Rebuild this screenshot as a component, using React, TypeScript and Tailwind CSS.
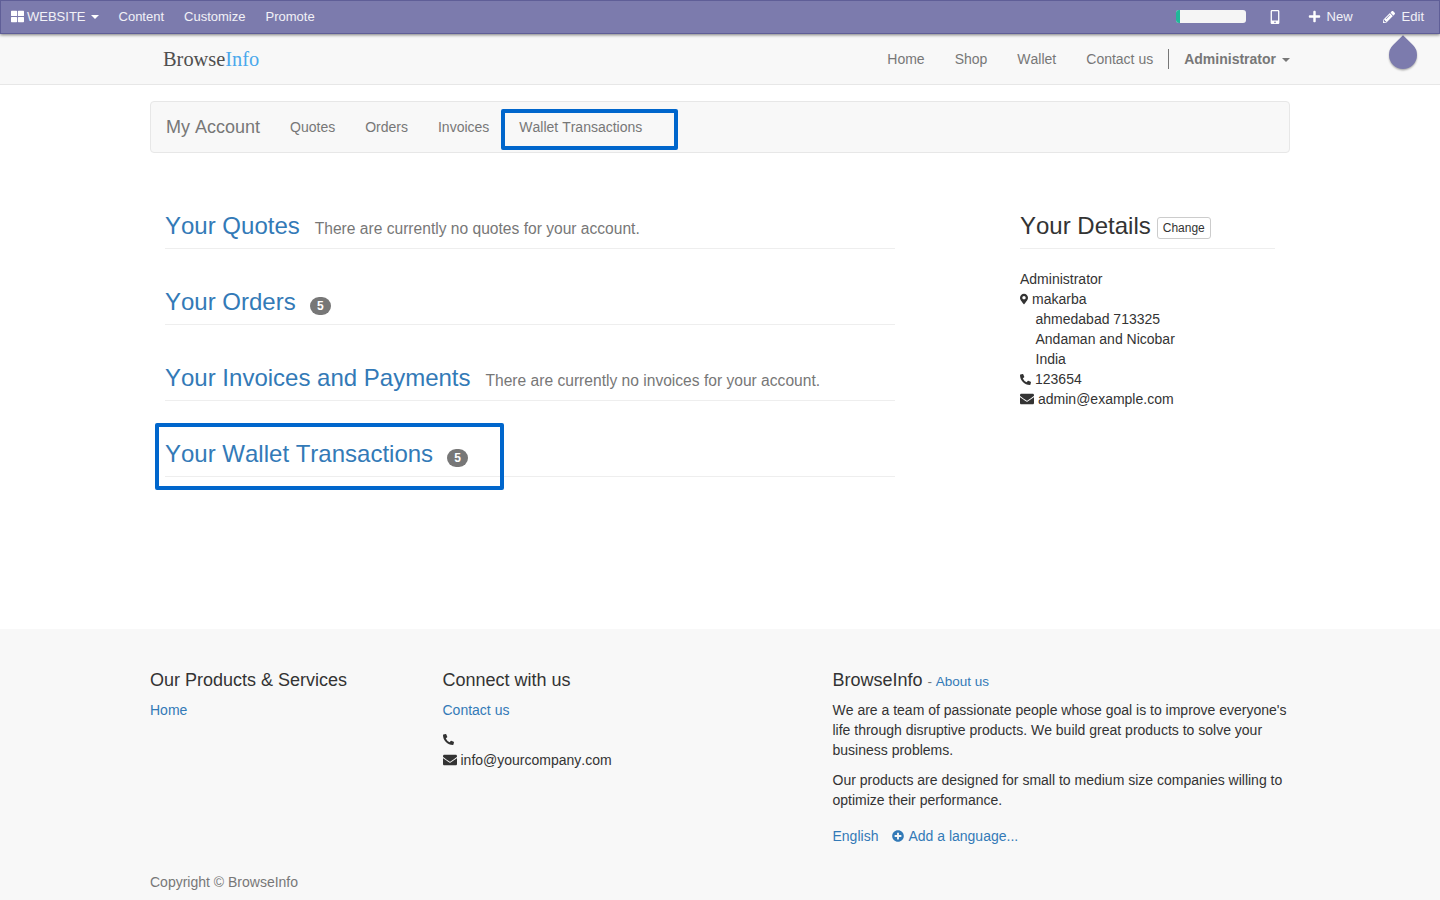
import React from "react";
import { FaThLarge, FaMobileAlt, FaPlus, FaPencilAlt, FaMapMarkerAlt, FaPhoneAlt, FaEnvelope, FaPlusCircle } from "react-icons/fa";

const Caret = ({ c = "border-t-white", gap = "ml-[5px]" }: { c?: string; gap?: string }) => (
  <span className={`inline-block ${gap} align-middle w-0 h-0 border-x-4 border-x-transparent border-t-4 ${c}`} />
);

const Section = ({ title, note, badge }: { title: string; note?: string; badge?: string }) => (
  <div className="mt-[40px] pb-[9px] h-[26px] box-content border-b border-[#eeeeee] flex items-baseline whitespace-nowrap">
    <a className="text-[24px] leading-[26.4px] text-[#337ab7]">{title}</a>
    {note && <span className="ml-[15px] text-[15.6px] text-[#777777]">{note}</span>}
    {badge && (
      <span className="ml-[14px] inline-flex items-center justify-center w-[21px] h-[18px] rounded-[10px] bg-[#777777] text-white text-[12px] font-bold leading-none">
        {badge}
      </span>
    )}
  </div>
);

export default function App() {
  return (
    <div className="relative min-h-[900px] bg-white text-[14px] leading-[20px] text-[#333333] [font-kerning:none] font-['Liberation_Sans',Arial,sans-serif]">
      <header className="relative z-10 h-[34px] bg-[#7c7bad] border border-[#5f5e97] shadow-[0_1px_3px_rgba(0,0,0,0.5)] text-[13px] text-[#ffffff]/90 flex items-center justify-between pl-[10px] pr-[15px] pb-[1px]">
        <div className="flex items-center">
          <span className="flex items-center">
            <FaThLarge className="text-white text-[13px] mr-[3px]" />
            WEBSITE
            <Caret />
          </span>
          <span className="ml-[20px]">Content</span>
          <span className="ml-[20px]">Customize</span>
          <span className="ml-[20px]">Promote</span>
        </div>
        <div className="flex items-center">
          <div className="w-[70px] h-[13px] rounded-[3px] bg-[#f5f5f5] overflow-hidden">
            <div className="w-[4px] h-full bg-[#21b799]" />
          </div>
          <FaMobileAlt className="ml-[22px] text-white text-[14px]" />
          <FaPlus className="ml-[26px] text-white text-[13px]" />
          <span className="ml-[6px]">New</span>
          <FaPencilAlt className="ml-[30px] text-white text-[12px]" />
          <span className="ml-[7px]">Edit</span>
        </div>
      </header>

      <nav className="h-[51px] bg-[#f8f8f8] border-b border-[#e7e7e7] relative">
        <div className="w-[1140px] mx-auto h-full flex items-center justify-between text-[#777777]">
          <span className="ml-[13px] text-[20.4px] font-['Liberation_Serif',serif] text-[#4f4f4f]">
            Browse<span className="text-[#4aa8ec]">Info</span>
          </span>
          <div className="flex items-center">
            <span>Home</span>
            <span className="ml-[30px]">Shop</span>
            <span className="ml-[30px]">Wallet</span>
            <span className="ml-[30px]">Contact us</span>
            <span className="ml-[15px] w-px h-[20px] bg-[#777777]" />
            <span className="ml-[15px] font-bold">Administrator<Caret c="border-t-[#777777]" gap="ml-[6px]" /></span>
          </div>
        </div>
        <div className="absolute left-[1389px] top-[7px] w-[28px] h-[28px] rounded-[0_50%_50%_50%] rotate-45 bg-[#7c7bad] shadow-[1px_1px_2px_rgba(0,0,0,0.3)]" />
      </nav>

      <main className="w-[1140px] mx-auto">
        <div className="mt-[16px] h-[52px] bg-[#f8f8f8] border border-[#e7e7e7] rounded-[4px] flex items-center text-[#777777]">
          <span className="ml-[15px] text-[18px]">My Account</span>
          <span className="ml-[30px]">Quotes</span>
          <span className="ml-[30px]">Orders</span>
          <span className="ml-[30px]">Invoices</span>
          <span className="ml-[30px]">Wallet Transactions</span>
        </div>

        <div className="grid grid-cols-[760px_1fr] h-[476px]">
          <div className="px-[15px] pt-[20px]">
            <Section title="Your Quotes" note="There are currently no quotes for your account." />
            <Section title="Your Orders" badge="5" />
            <Section title="Your Invoices and Payments" note="There are currently no invoices for your account." />
            <Section title="Your Wallet Transactions" badge="5" />
          </div>
          <div className="pl-[110px] pr-[15px] pt-[60px]">
            <div className="h-[36px] border-b border-[#eeeeee] flex items-start whitespace-nowrap">
              <span className="text-[24px] leading-[26.4px]">Your Details</span>
              <span className="ml-[6px] mt-[4px] px-[5px] h-[22px] text-[12px] leading-[20px] border border-[#cccccc] rounded-[3px]">Change</span>
            </div>
            <div className="mt-[20px]">
              <div>Administrator</div>
              <div className="flex items-center"><FaMapMarkerAlt className="w-[8px] h-[12px] mr-[4px]" />makarba</div>
              <div className="pl-[15.5px]">ahmedabad 713325</div>
              <div className="pl-[15.5px]">Andaman and Nicobar</div>
              <div className="pl-[15.5px]">India</div>
              <div className="flex items-center"><FaPhoneAlt className="text-[11px] mr-[4px]" />123654</div>
              <div className="flex items-center"><FaEnvelope className="text-[14px] mr-[4px]" />admin@example.com</div>
            </div>
          </div>
        </div>
      </main>

      <footer className="h-[271px] bg-[#f8f8f8]">
        <div className="w-[1140px] mx-auto pt-[41px]">
          <div className="grid grid-cols-[292.5px_390px_1fr]">
            <div>
              <h4 className="h-[20px] text-[18px] leading-[20px] mb-[10px]">Our Products &amp; Services</h4>
              <a className="text-[#337ab7]">Home</a>
            </div>
            <div>
              <h4 className="h-[20px] text-[18px] leading-[20px] mb-[10px]">Connect with us</h4>
              <a className="text-[#337ab7]">Contact us</a>
              <div className="mt-[10px] h-[20px] flex items-center pb-[1px]"><FaPhoneAlt className="text-[11px]" /></div>
              <div className="flex items-center"><FaEnvelope className="text-[14px] mr-[4px]" />info@yourcompany.com</div>
            </div>
            <div>
              <h4 className="h-[20px] text-[18px] leading-[20px] mb-[10px]">BrowseInfo <small className="text-[13.5px] text-[#777777]">- <a className="text-[#337ab7]">About us</a></small></h4>
              <p className="mb-[10px]">We are a team of passionate people whose goal is to improve everyone's life through disruptive products. We build great products to solve your business problems.</p>
              <p>Our products are designed for small to medium size companies willing to optimize their performance.</p>
              <div className="mt-[16px] flex items-center text-[#337ab7]">
                <span>English</span>
                <FaPlusCircle className="ml-[14px] text-[12px] mr-[4px]" />
                <span>Add a language...</span>
              </div>
            </div>
          </div>
          <div className="mt-[26px] text-[#777777]">Copyright © BrowseInfo</div>
        </div>
      </footer>

      <div className="absolute left-[501px] top-[109px] w-[177px] h-[41px] border-[4px] border-[#0066cc] rounded-[2px]" />
      <div className="absolute left-[155px] top-[423px] w-[349px] h-[67px] border-[4px] border-[#0066cc] rounded-[2px]" />
    </div>
  );
}
